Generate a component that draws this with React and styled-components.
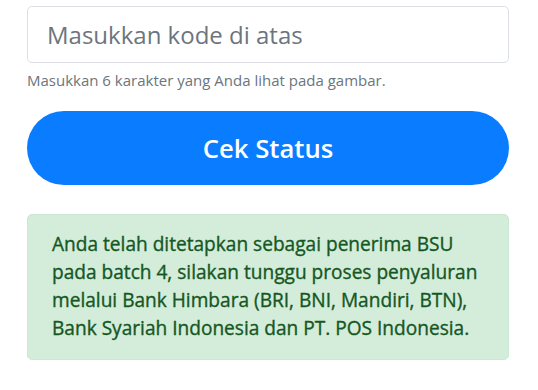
import styled, { createGlobalStyle } from "styled-components";

const GlobalStyle = createGlobalStyle`
  html, body {
    margin: 0;
    padding: 0;
    background: #ffffff;
  }
  body {
    font-family: "Open Sans", "Noto Sans", sans-serif;
  }
`;

const Page = styled.div`
  display: flex;
  flex-direction: column;
  padding: 6px 29px 0 27px;
`;

const CodeInput = styled.input`
  box-sizing: border-box;
  width: 100%;
  height: 57px;
  padding: 0 19px;
  border: 1px solid #dcdfe3;
  border-radius: 5px;
  font-family: "Open Sans", sans-serif;
  font-size: 24px;
  color: #333;
  outline: none;
  &::placeholder {
    color: #6c757d;
  }
`;

const Hint = styled.small`
  display: block;
  margin-top: 7px;
  font-size: 15px;
  line-height: 20px;
  color: #6c757d;
`;

const SubmitButton = styled.button`
  margin-top: 21px;
  height: 74px;
  width: 100%;
  border: none;
  border-radius: 37px;
  background: #0a7cff;
  color: #ffffff;
  font-family: "Open Sans", sans-serif;
  font-weight: 600;
  font-size: 25.7px;
  cursor: pointer;
`;

const Alert = styled.div`
  margin-top: 29px;
  box-sizing: border-box;
  padding: 15px 24px 17px 24px;
  background: #d4edda;
  border: 1px solid #c9e7d1;
  border-radius: 5px;
  color: #155724;
  font-size: 19.1px;
  font-weight: 400;
  line-height: 28px;
  -webkit-text-stroke: 0.35px currentColor;
`;

export default function App() {
  return (
    <>
      <GlobalStyle />
      <Page>
        <CodeInput type="text" placeholder="Masukkan kode di atas" />
        <Hint>Masukkan 6 karakter yang Anda lihat pada gambar.</Hint>
        <SubmitButton type="button">Cek Status</SubmitButton>
        <Alert>
          Anda telah ditetapkan sebagai penerima BSU pada batch 4, silakan
          tunggu proses penyaluran melalui Bank Himbara (BRI, BNI, Mandiri,
          BTN), Bank Syariah Indonesia dan PT. POS Indonesia.
        </Alert>
      </Page>
    </>
  );
}
